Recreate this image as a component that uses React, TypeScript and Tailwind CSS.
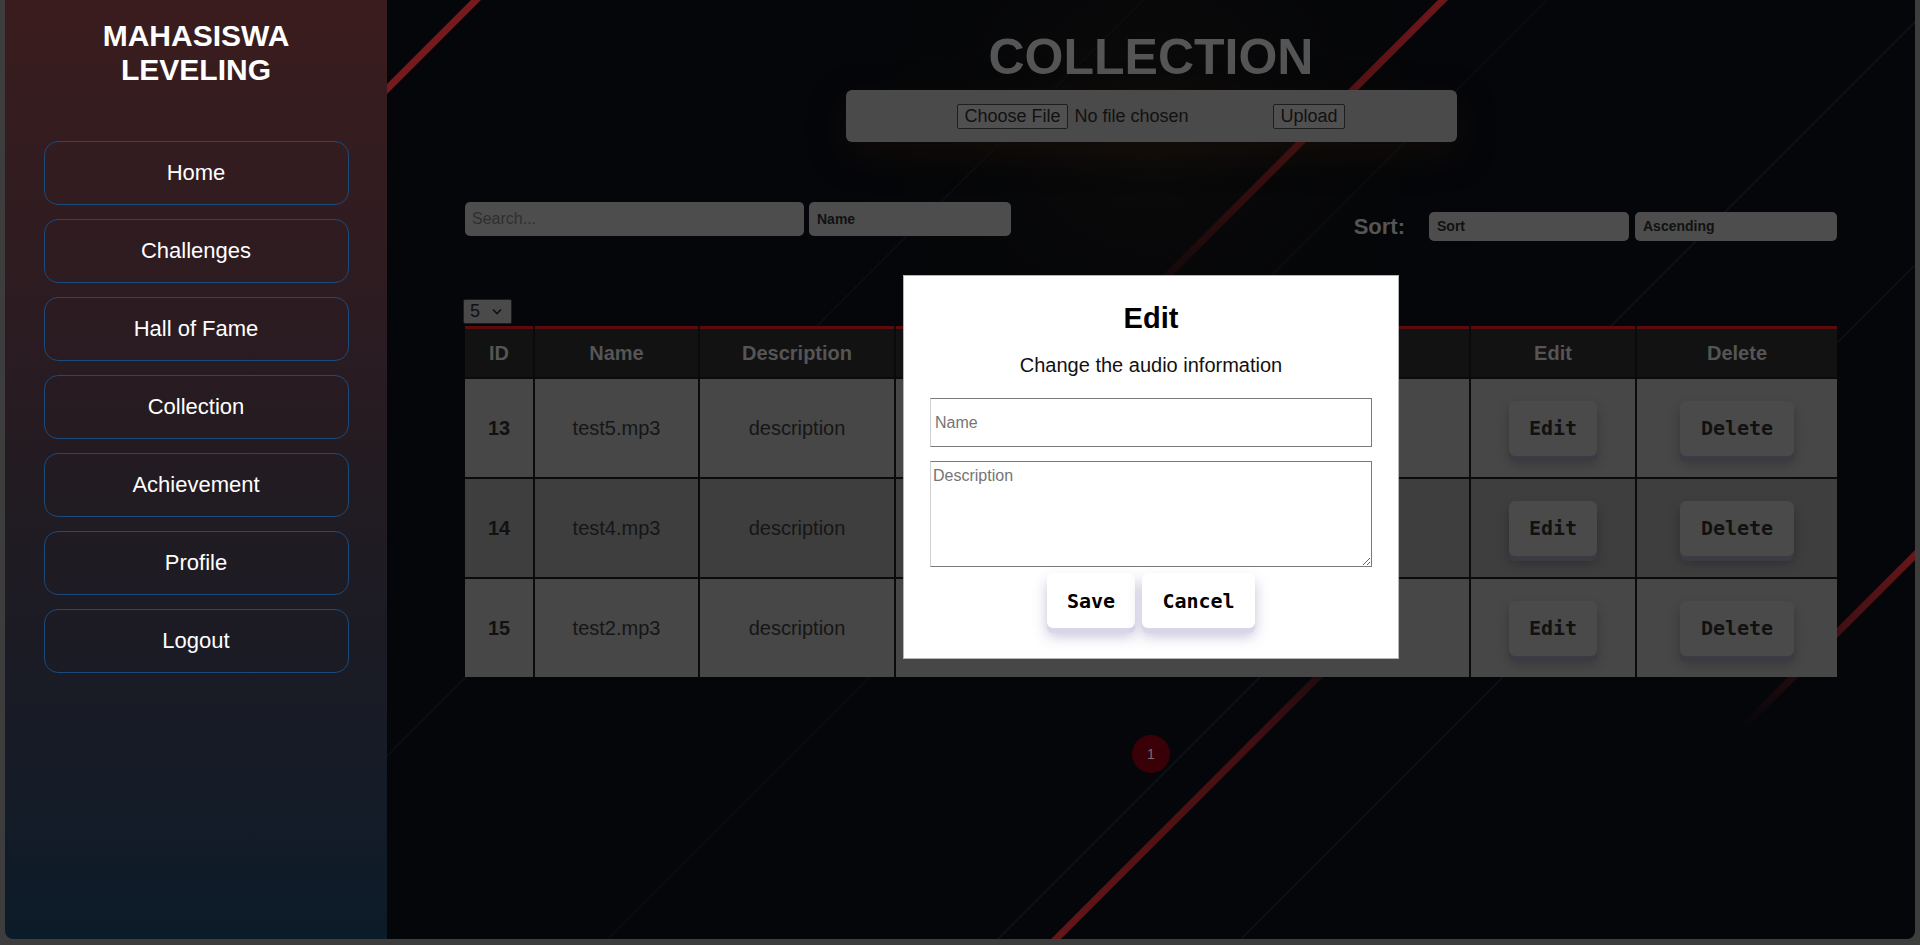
import React from "react";

const navs = ["Home", "Challenges", "Hall of Fame", "Collection", "Achievement", "Profile", "Logout"];
const rows = [
  { id: 13, name: "test5.mp3", bg: "bg-[#474747]" },
  { id: 14, name: "test4.mp3", bg: "bg-[#3e3e3e]" },
  { id: 15, name: "test2.mp3", bg: "bg-[#474747]" },
];

function Background() {
  return (
    <svg className="absolute inset-0 w-full h-full" viewBox="0 0 1528 939" preserveAspectRatio="none">
      <defs>
        <linearGradient id="r2" gradientUnits="userSpaceOnUse" x1="1106" y1="-50" x2="736" y2="320">
          <stop offset="0" stopColor="#7a1a1d" stopOpacity="1" />
          <stop offset="0.5" stopColor="#621417" stopOpacity="0.75" />
          <stop offset="1" stopColor="#4a0f12" stopOpacity="0" />
        </linearGradient>
        <linearGradient id="r3" gradientUnits="userSpaceOnUse" x1="988" y1="620" x2="640" y2="968">
          <stop offset="0" stopColor="#5a1215" stopOpacity="0" />
          <stop offset="0.35" stopColor="#561215" stopOpacity="0.75" />
          <stop offset="1" stopColor="#6a171a" stopOpacity="1" />
        </linearGradient>
        <linearGradient id="r4" gradientUnits="userSpaceOnUse" x1="1563" y1="520" x2="1353" y2="730">
          <stop offset="0" stopColor="#7a1a1d" stopOpacity="1" />
          <stop offset="0.5" stopColor="#621417" stopOpacity="0.7" />
          <stop offset="1" stopColor="#4a0f12" stopOpacity="0" />
        </linearGradient>
        <radialGradient id="glow" cx="764" cy="120" r="420" gradientUnits="userSpaceOnUse">
          <stop offset="0" stopColor="#15100a" stopOpacity="0.5" />
          <stop offset="1" stopColor="#000000" stopOpacity="0" />
        </radialGradient>
      </defs>
      <rect x="0" y="0" width="1528" height="939" fill="url(#glow)" />
      <line x1="1550" y1="0" x2="611" y2="939" stroke="#101318" strokeWidth="1.5" />
      <line x1="1793" y1="0" x2="854" y2="939" stroke="#0e1116" strokeWidth="1.5" />
      <line x1="1160" y1="0" x2="221" y2="939" stroke="#0b0e13" strokeWidth="1.5" />
      <line x1="756" y1="0" x2="-183" y2="939" stroke="#0b0e13" strokeWidth="1.5" />
      <line x1="139" y1="-50" x2="-60" y2="149" stroke="#761a1d" strokeWidth="7" />
      <line x1="1106" y1="-50" x2="736" y2="320" stroke="url(#r2)" strokeWidth="7" />
      <line x1="988" y1="620" x2="640" y2="968" stroke="url(#r3)" strokeWidth="7" />
      <line x1="1563" y1="520" x2="1353" y2="730" stroke="url(#r4)" strokeWidth="7" />
    </svg>
  );
}

function DimSelect({ label, w, h }: { label: string; w: string; h: string }) {
  return (
    <div className={`${w} ${h} rounded-[5px] bg-[#4d4d4d] pl-[8px] flex items-center text-[14px] font-bold text-[#111]`}>
      {label}
    </div>
  );
}

export default function App() {
  return (
    <div className="w-[1920px] h-[945px] bg-[#3d3d3d] px-[5px] overflow-hidden font-['Liberation_Sans',Arial,sans-serif]">
      <div className="flex h-[939px] rounded-b-[8px] overflow-hidden">
        <aside className="w-[382px] shrink-0 bg-gradient-to-b from-[#3b1c1e] via-[#231b22] to-[#0c1b29] flex flex-col items-center pt-[19px]">
          <h1 className="text-white font-bold text-[30px] leading-[34px] text-center">
            MAHASISWA
            <br />
            LEVELING
          </h1>
          <nav className="mt-[54px] flex flex-col gap-[14px]">
            {navs.map((n) => (
              <div
                key={n}
                className="w-[305px] h-[64px] rounded-[14px] border border-[#1b4a7d] flex items-center justify-center text-white text-[22px] leading-[26px]"
              >
                {n}
              </div>
            ))}
          </nav>
        </aside>

        <main className="relative flex-1 bg-[#04060a] overflow-hidden">
          <Background />
          <div className="relative flex flex-col">
            <h2 className="pt-[32px] text-[50px] leading-[50px] font-bold text-[#555555] text-center">COLLECTION</h2>

            <div className="mt-[8px] mx-auto w-[611px] h-[52px] rounded-[6px] bg-[#4a4a4a] flex items-center justify-center shadow-[0_12px_36px_rgba(40,24,8,0.35)]">
              <div className="w-[316px] flex items-center">
                <div className="h-[25px] px-[6px] border border-[#1e1e1e] bg-[#505050] rounded-[2px] text-[18px] leading-[23px] text-[#111]">
                  Choose File
                </div>
                <span className="ml-[7px] text-[18px] leading-[23px] text-[#111]">No file chosen</span>
              </div>
              <div className="h-[25px] px-[6px] border border-[#1e1e1e] bg-[#505050] rounded-[2px] text-[18px] leading-[23px] text-[#111]">
                Upload
              </div>
            </div>

            <div className="mt-[60px] px-[78px] flex justify-between items-start">
              <div className="flex gap-[5px]">
                <div className="w-[339px] h-[34px] rounded-[5px] bg-[#4d4d4d] pl-[7px] flex items-center text-[16px] text-[#2f2f2f]">
                  Search...
                </div>
                <DimSelect label="Name" w="w-[202px]" h="h-[34px]" />
              </div>
              <div className="mt-[10px] h-[29px] flex items-center">
                <span className="text-[22px] leading-[25px] font-bold text-[#555555] mr-[24px]">Sort:</span>
                <DimSelect label="Sort" w="w-[200px]" h="h-[29px]" />
                <div className="w-[6px]" />
                <DimSelect label="Ascending" w="w-[202px]" h="h-[29px]" />
              </div>
            </div>

            <div className="mt-[58px] px-[78px]">
              <div className="-ml-[2px] w-[49px] h-[25px] bg-[#4a4a4a] border border-[#1c1c1c] rounded-[2px] flex items-center pl-[6px] text-[18px] leading-[21px] text-[#111]">
                <span>5</span>
                <svg className="ml-[12px]" width="10" height="7" viewBox="0 0 10 7">
                  <path d="M1 1.5 L5 5.5 L9 1.5" fill="none" stroke="#111" strokeWidth="1.6" />
                </svg>
              </div>

              <div className="mt-[2px] grid grid-cols-[68px_163px_194px_573px_164px_200px] gap-[2px] bg-[#0b0b0b]">
                {["ID", "Name", "Description", "", "Edit", "Delete"].map((h, i) => (
                  <div
                    key={i}
                    className="h-[51px] border-t-[3px] border-[#5c0b0d] bg-[#121212] flex items-center justify-center text-[20px] leading-[23px] font-bold text-[#555555]"
                  >
                    {h}
                  </div>
                ))}
                {rows.map((r) => (
                  <React.Fragment key={r.id}>
                    <div className={`${r.bg} h-[98px] flex items-center justify-center text-[20px] font-bold text-[#111]`}>{r.id}</div>
                    <div className={`${r.bg} h-[98px] flex items-center justify-center text-[20px] text-[#161616]`}>{r.name}</div>
                    <div className={`${r.bg} h-[98px] flex items-center justify-center text-[20px] text-[#161616]`}>description</div>
                    <div className={`${r.bg} h-[98px]`} />
                    <div className={`${r.bg} h-[98px] flex items-center justify-center`}>
                      <div className="h-[55px] w-[88px] rounded-[6px] bg-[#4a4a4a] flex items-center justify-center font-['DejaVu_Sans_Mono',monospace] font-bold text-[20px] text-[#111] shadow-[0_5px_0_#3c3b44,0_7px_12px_rgba(0,0,0,0.25)]">
                        Edit
                      </div>
                    </div>
                    <div className={`${r.bg} h-[98px] flex items-center justify-center`}>
                      <div className="h-[55px] w-[114px] rounded-[6px] bg-[#4a4a4a] flex items-center justify-center font-['DejaVu_Sans_Mono',monospace] font-bold text-[20px] text-[#111] shadow-[0_5px_0_#3c3b44,0_7px_12px_rgba(0,0,0,0.25)]">
                        Delete
                      </div>
                    </div>
                  </React.Fragment>
                ))}
              </div>
            </div>

            <div className="mt-[58px] mx-auto w-[38px] h-[38px] rounded-full bg-[#3a0007] flex items-center justify-center text-[14px] text-[#7d6d6e]">
              1
            </div>
          </div>

          <div className="absolute inset-0 flex justify-center items-start pt-[275px]">
            <div className="w-[496px] bg-white border border-[#b5b5b5] pt-[25px] pb-[25px] px-[26px] flex flex-col items-center">
              <div className="text-[29px] leading-[34px] font-bold text-black">Edit</div>
              <div className="mt-[18px] text-[20px] leading-[24px] text-[#111]">Change the audio information</div>
              <input
                placeholder="Name"
                className="mt-[21px] w-[442px] h-[49px] border border-[#7a7a7a] border-l-[#d0d0d0] px-[4px] text-[16px] outline-none placeholder:text-[#757575] font-['Liberation_Sans',Arial,sans-serif]"
              />
              <textarea
                placeholder="Description"
                className="mt-[14px] w-[442px] h-[106px] border border-[#7a7a7a] border-l-[#d0d0d0] px-[2px] py-[2px] text-[16px] outline-none placeholder:text-[#757575] font-['Liberation_Sans',Arial,sans-serif]"
              />
              <div className="mt-[6px] pb-[5px] flex gap-[7px]">
                <div className="h-[55px] w-[88px] rounded-[6px] bg-white flex items-center justify-center font-['DejaVu_Sans_Mono',monospace] font-bold text-[20px] text-black shadow-[0_5px_0_#d9d6ea,0_8px_14px_rgba(90,80,140,0.35)]">
                  Save
                </div>
                <div className="h-[55px] w-[113px] rounded-[6px] bg-white flex items-center justify-center font-['DejaVu_Sans_Mono',monospace] font-bold text-[20px] text-black shadow-[0_5px_0_#d9d6ea,0_8px_14px_rgba(90,80,140,0.35)]">
                  Cancel
                </div>
              </div>
            </div>
          </div>
        </main>
      </div>
    </div>
  );
}
